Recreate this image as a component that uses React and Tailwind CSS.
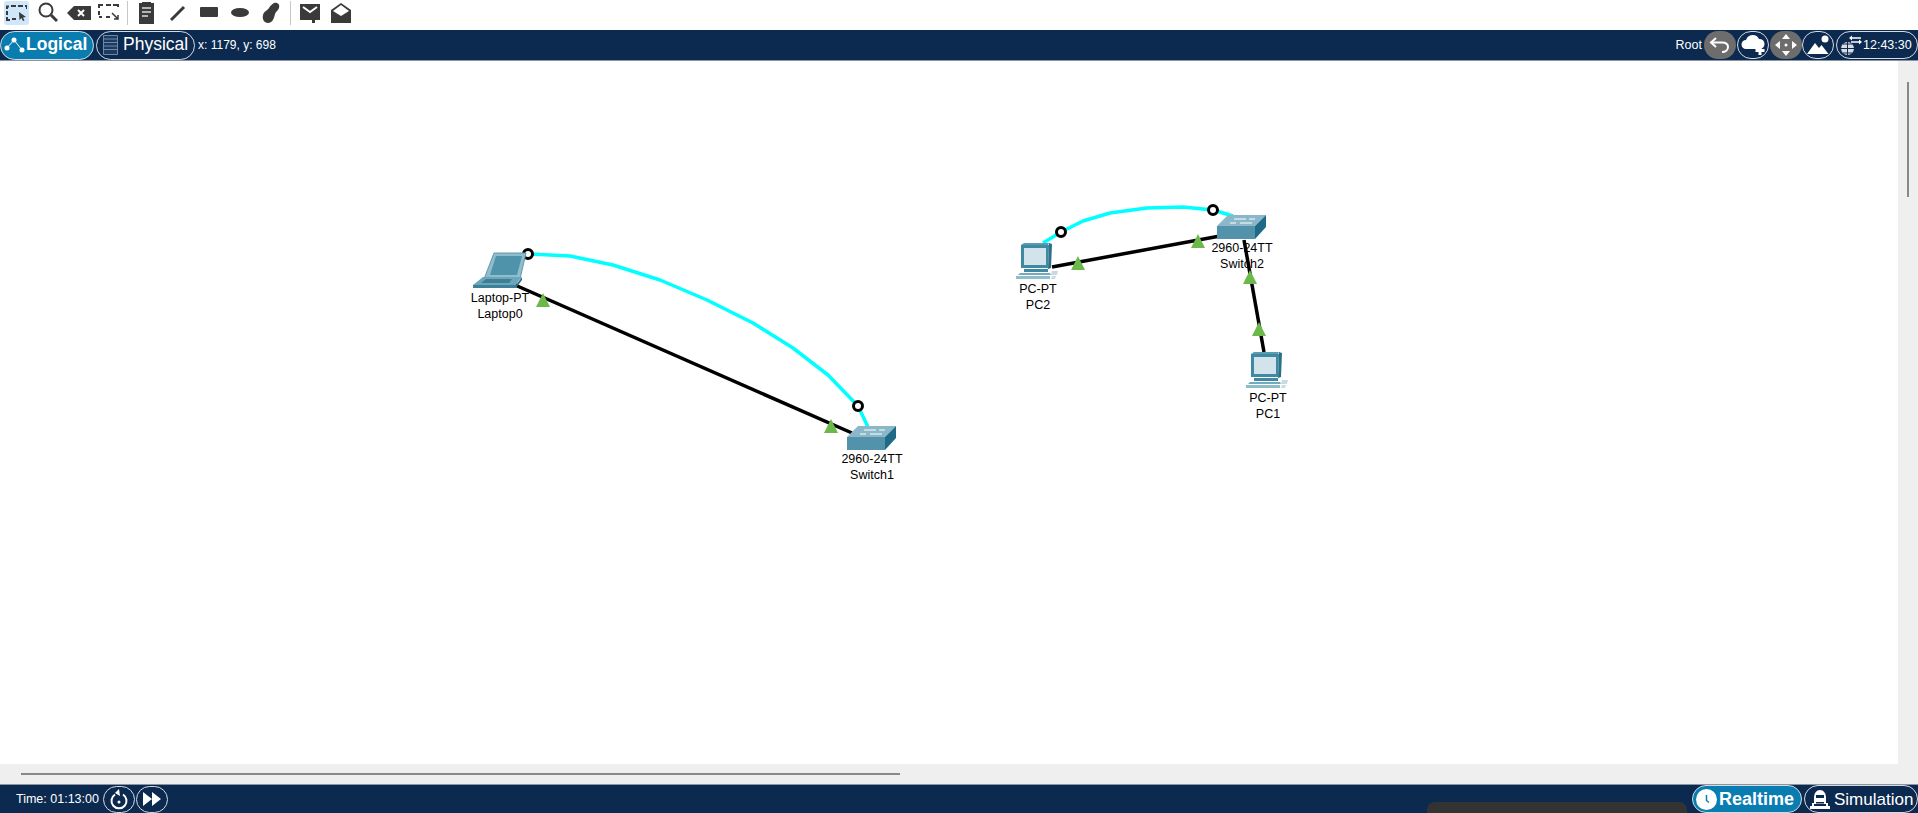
const FONT = "font-['Liberation_Sans',Arial,sans-serif]";

function ToolIcon({ width, children, className = "" }) {
  return (
    <svg width={width} height="24" viewBox={`0 0 ${width} 24`} className={`shrink-0 ${className}`}>
      {children}
    </svg>
  );
}

function Separator() {
  return <div className="h-[24px] w-px bg-[#c8c8c8]" />;
}

function Toolbar() {
  return (
    <div className="flex h-[30px] items-start bg-white pl-[4px] pt-px">
      <div className="flex h-[24px] w-[25px] items-center justify-center rounded-[3px] bg-[#cfe6fb]">
        <svg width="21" height="16" viewBox="0 0 21 16" fill="none">
          <path d="M0 1.500h3M5 1h5M12 1h5M19 1h2v3M1 1v3M1 6v4M1 12v3h3M6 14h4" stroke="#3a3a3a" strokeWidth="2" />
          <path d="M13 7l7 5-3 .5 1.500 3-1.500.5-1.500-3-2 2z" fill="#3a3a3a" />
        </svg>
      </div>
      <ToolIcon width="21" className="ml-[8px]">
        <circle cx="9" cy="9" r="6.500" fill="none" stroke="#3a3a3a" strokeWidth="2" />
        <path d="M14 14l6 6" stroke="#3a3a3a" strokeWidth="3" />
      </ToolIcon>
      <ToolIcon width="25" className="ml-[9px]">
        <path d="M0 12l7-7h17v14H7z" fill="#3a3a3a" />
        <path d="M11 9l6 6M17 9l-6 6" stroke="#fff" strokeWidth="2" />
      </ToolIcon>
      <ToolIcon width="22" className="ml-[6px]">
        <path d="M1 7V4h4M8 4h5M15 4h5v2M1 10v4M1 16h3M8 16h4" stroke="#3a3a3a" strokeWidth="2" fill="none" />
        <path d="M14 12l6 6M20 14v4h-4" stroke="#3a3a3a" strokeWidth="1.500" fill="none" />
      </ToolIcon>
      <div className="ml-[7px]">
        <Separator />
      </div>
      <ToolIcon width="15" className="ml-[11px]">
        <path d="M0 2h3V1h9v1h3v21H0z" fill="#3a3a3a" />
        <path d="M3 7h9M3 11h9M3 15h6" stroke="#ddd" strokeWidth="1.500" />
      </ToolIcon>
      <ToolIcon width="16" className="ml-[16px]">
        <path d="M1 19L14 6" stroke="#3a3a3a" strokeWidth="3" />
      </ToolIcon>
      <ToolIcon width="18" className="ml-[14px]">
        <rect x="0" y="6" width="18" height="10" rx="1" fill="#3a3a3a" />
      </ToolIcon>
      <ToolIcon width="18" className="ml-[13px]">
        <ellipse cx="9" cy="11.500" rx="9" ry="4.500" fill="#3a3a3a" />
      </ToolIcon>
      <ToolIcon width="18" className="ml-[13px]">
        <path d="M12 2c4-1 6 2 5 5-1 3-3 3-4 6-1 5-3 9-7 9-4 0-6-4-5-8 1-4 4-4 6-7 1-2 3-4 5-5z" fill="#3a3a3a" />
      </ToolIcon>
      <div className="ml-[10px]">
        <Separator />
      </div>
      <ToolIcon width="21" className="ml-[9px]">
        <path d="M0 3h20v16h-5v3h-3v-3H0z" fill="#3a3a3a" />
        <path d="M3 6l7 5 7-5" stroke="#fff" strokeWidth="2" fill="none" />
      </ToolIcon>
      <ToolIcon width="21" className="ml-[10px]">
        <path d="M10 2l10 7v13H0V9z" fill="#3a3a3a" />
        <path d="M2 10l8-6 8 6-8 5z" fill="#fff" />
      </ToolIcon>
    </div>
  );
}

function LogicalGlyph() {
  return (
    <svg width="22" height="20" viewBox="0 0 22 20" className="shrink-0">
      <path d="M4 13l7-8 8 10" stroke="#fff" strokeWidth="1" fill="none" />
      <circle cx="11" cy="5" r="2.500" fill="#fff" />
      <circle cx="4" cy="13" r="2.500" fill="#fff" />
      <circle cx="19" cy="15" r="2.500" fill="#fff" />
    </svg>
  );
}

function RoundBtn({ gray, children, className = "" }) {
  return (
    <div
      className={`flex h-[28px] w-[32px] items-center justify-center rounded-full ${
        gray ? "bg-[#6d6d6d]" : "border border-[#d5dbe3] bg-[#0c2a50]"
      } ${className}`}
    >
      {children}
    </div>
  );
}

function NavBar() {
  return (
    <div className="flex h-[31px] items-center border-b border-[#8a94a3] bg-[#0c2a50] text-white">
      <div className="flex h-[29px] w-[94px] items-center rounded-full border border-[#d5dbe3] bg-[#0a7db0] pl-[2px]">
        <LogicalGlyph />
        <span className="ml-[1px] text-[17.500px] font-bold leading-none">Logical</span>
      </div>
      <div className="ml-[2px] flex h-[29px] w-[99px] items-center rounded-full border border-[#d5dbe3] pl-[6px]">
        <svg width="15" height="20" viewBox="0 0 15 20" className="shrink-0">
          <path d="M.5.5h14v19H.5zM.5 4h14M.5 7.500h14M.5 11h14M.5 14.500h14" fill="#1c3b61" stroke="#6f88a5" />
        </svg>
        <span className="ml-[5px] text-[17.500px] leading-none">Physical</span>
      </div>
      <span className="ml-[3px] text-[12px]">x: 1179, y: 698</span>
      <div className="ml-auto flex items-center">
        <span className="mr-[2px] text-[12.500px]">Root</span>
        <RoundBtn gray>
          <svg width="22" height="20" viewBox="0 0 22 20" fill="none">
            <path d="M7 3L2 7.500 7 12" stroke="#fff" strokeWidth="2" />
            <path d="M2 7.500h11c4 0 6 2 6 4.500s-2 5-6 5" stroke="#fff" strokeWidth="2" />
          </svg>
        </RoundBtn>
        <RoundBtn className="ml-px">
          <svg width="26" height="22" viewBox="0 0 26 22">
            <path d="M6 15a4.500 4.500 0 0 1 0-9 7 7 0 0 1 13-1 5 5 0 0 1 1 10z" fill="#fff" />
            <path d="M20 12v9M15.500 16.500h9" stroke="#fff" strokeWidth="3" />
          </svg>
        </RoundBtn>
        <RoundBtn gray className="ml-px">
          <svg width="24" height="24" viewBox="0 0 24 24" fill="#fff">
            <path d="M12 1l4 5H8zM12 23l-4-5h8zM1 12l5-4v8zM23 12l-5 4V8z" />
            <circle cx="12" cy="12" r="1.500" />
          </svg>
        </RoundBtn>
        <RoundBtn>
          <svg width="26" height="22" viewBox="0 0 26 22" fill="#fff">
            <path d="M2 20l8-11 4 5 2.500-3 7 9z" />
            <circle cx="20" cy="5" r="3.500" />
          </svg>
        </RoundBtn>
        <div className="ml-[2px] flex h-[28px] w-[82px] items-center rounded-full border border-[#d5dbe3] pl-[3px]">
          <svg width="22" height="24" viewBox="0 0 22 24" className="shrink-0" fill="none">
            <circle cx="7.500" cy="15.500" r="6.500" fill="#d8dde4" />
            <path d="M1 15.500h13M7.500 9v13M3 11h9M3 20h9" stroke="#0c2a50" strokeWidth="1" />
            <path d="M12 5h9M11 9h10" stroke="#fff" strokeWidth="1.500" />
            <path d="M12 2.500L9 5l3 2.500zM19 6.500L22 9l-3 2.500z" fill="#fff" />
          </svg>
          <span className="ml-[1px] text-[12.500px]">12:43:30</span>
        </div>
      </div>
    </div>
  );
}

function LaptopIcon() {
  return (
    <svg width="54" height="36" viewBox="0 0 54 36">
      <path d="M21 1h32l-6 26H11z" fill="#8fbdcc" stroke="#5f9aae" />
      <path d="M23 4h26l-5 19H17z" fill="#4f93aa" />
      <path d="M10 25h38l-5 8H0z" fill="#6ba6ba" />
      <path d="M13 27h26l-3 4H8z" fill="#3f7f96" />
      <path d="M0 33h43v3H0z" fill="#3f8099" />
      <path d="M43 33l6-8v3l-6 8z" fill="#2e6b82" />
    </svg>
  );
}

function PcIcon() {
  return (
    <svg width="44" height="36" viewBox="0 0 44 36">
      <path d="M5 2h28l-1 23H5z" fill="#3f8aa3" />
      <path d="M33 0l3 1-1 24-3 1z" fill="#2d6f87" />
      <path d="M5 2l3-2h25l-1 2z" fill="#5a9db3" />
      <rect x="8" y="5" width="22" height="17" fill="#d3e3ec" />
      <path d="M8 26h24v3H8z" fill="#3f8aa3" />
      <path d="M4 30h30l1 2H2z" fill="#74aabd" />
      <path d="M0 33h34v3H0z" fill="#8fbdcc" />
      <path d="M36 28h6l-1 4h-6zM36 33h4l-1 3h-4z" fill="#c8dbe3" />
    </svg>
  );
}

function SwitchIcon() {
  return (
    <svg width="49" height="24" viewBox="0 0 49 24" className="-translate-x-px">
      <path d="M11 0h38l-11 11H0z" fill="#8ab8c8" />
      <path d="M0 11h38v13H0z" fill="#5292aa" />
      <path d="M38 11L49 0v12L38 24z" fill="#1f6b87" />
      <path d="M17 4h12M32 4h6M13 8h6M23 8h12" stroke="#fff" strokeWidth="1" />
    </svg>
  );
}

function Triangle({ x, y }) {
  return <path d={`M${x} ${y - 7}l7 14h-14z`} fill="#6cb84a" />;
}

function Port({ x, y }) {
  return <circle cx={x} cy={y} r="4.500" fill="#fff" stroke="#000" strokeWidth="3" />;
}

function Wires() {
  return (
    <svg width="1898" height="703" viewBox="0 61 1898 703" className="absolute inset-0">
      <g fill="none" stroke="#00ffff" strokeWidth="3.500" strokeLinejoin="round">
        <polyline points="530,254 570,256 613,265 660,280 707,300 753,323 793,348 828,375 858,406 868,427" />
        <polyline points="1043,243 1061,232 1083,221 1110,213 1147,208 1183,207 1213,210 1233,216" />
      </g>
      <g stroke="#000" strokeWidth="3.500">
        <path d="M515 285L852 433" />
        <path d="M1052 267L1220 236" />
        <path d="M1244 240L1264 352" />
      </g>
      <Triangle x={543} y={300} />
      <Triangle x={831} y={426} />
      <Triangle x={1078} y={263} />
      <Triangle x={1198} y={241} />
      <Triangle x={1250} y={277} />
      <Triangle x={1259} y={329} />
      <Port x={528} y={254} />
      <Port x={858} y={406} />
      <Port x={1061} y={232} />
      <Port x={1213} y={210} />
    </svg>
  );
}

function Node({ className, icon, lines, gap }) {
  return (
    <div className={`absolute flex w-[100px] flex-col items-center text-[12.500px] leading-[16px] text-black ${className}`}>
      {icon}
      <div className={`text-center ${gap}`}>
        {lines.map((line) => (
          <div key={line}>{line}</div>
        ))}
      </div>
    </div>
  );
}

function Canvas() {
  return (
    <div className="flex min-h-0 flex-1">
      <div className="flex min-w-0 flex-1 flex-col">
        <div className="relative flex-1 overflow-hidden bg-white">
          <Wires />
          <Node className="left-[450px] top-[191px]" icon={<LaptopIcon />} lines={["Laptop-PT", "Laptop0"]} gap="mt-[2px]" />
          <Node className="left-[822px] top-[365px]" icon={<SwitchIcon />} lines={["2960-24TT", "Switch1"]} gap="mt-px" />
          <Node className="left-[988px] top-[182px]" icon={<PcIcon />} lines={["PC-PT", "PC2"]} gap="mt-[2px]" />
          <Node className="left-[1192px] top-[154px]" icon={<SwitchIcon />} lines={["2960-24TT", "Switch2"]} gap="mt-px" />
          <Node className="left-[1218px] top-[291px]" icon={<PcIcon />} lines={["PC-PT", "PC1"]} gap="mt-[2px]" />
        </div>
        <div className="flex h-[20px] items-center bg-[#efefef] pl-[21px]">
          <div className="h-[2px] w-[879px] bg-[#888]" />
        </div>
      </div>
      <div className="w-[20px] bg-[#efefef] pl-[9px] pt-[21px]">
        <div className="h-[115px] w-[2px] bg-[#888]" />
      </div>
    </div>
  );
}

function Footer() {
  return (
    <div className="relative flex h-[29px] items-center border-t border-[#8a94a3] bg-[#0c2a50] text-white">
      <span className="ml-[16px] text-[12.500px]">Time: 01:13:00</span>
      <div className="ml-[4px] flex h-[27px] w-[32px] items-center justify-center rounded-full border border-[#d5dbe3]">
        <svg width="20" height="22" viewBox="0 0 20 22" fill="none">
          <path d="M6 6.500a7.500 7.500 0 1 0 8 0" stroke="#fff" strokeWidth="2" />
          <path d="M10 1L6 5l5 3z" fill="#fff" />
          <circle cx="10" cy="14" r="1.500" fill="#fff" />
        </svg>
      </div>
      <div className="ml-[1px] flex h-[27px] w-[32px] items-center justify-center rounded-full border border-[#d5dbe3]">
        <svg width="18" height="14" viewBox="0 0 18 14" fill="#fff">
          <path d="M0 0l9 7-9 7zM9 0l9 7-9 7z" />
        </svg>
      </div>
      <div className="ml-auto flex items-center">
        <div className="flex h-[28px] w-[110px] items-center rounded-full border border-[#d5dbe3] bg-[#0a7db0] pl-[3px]">
          <svg width="21" height="21" viewBox="0 0 21 21" className="shrink-0">
            <circle cx="10.500" cy="10.500" r="10.500" fill="#fff" />
            <path d="M10.500 6v5.500l2.500 2" stroke="#0a7db0" strokeWidth="1.500" fill="none" />
          </svg>
          <span className="ml-[2px] text-[18px] font-bold leading-none">Realtime</span>
        </div>
        <div className="ml-[2px] flex h-[28px] w-[114px] items-center rounded-full border border-[#d5dbe3] pl-[4px]">
          <svg width="22" height="22" viewBox="0 0 22 22" className="shrink-0" fill="#fff">
            <path d="M5 10c0-5 2.500-8 6-8s6 3 6 8v6H5z" />
            <path d="M7 7h8v3H7z" fill="#0c2a50" />
            <path d="M1 18h20v3H1zM3 15h2v3H3zM17 15h2v3h-2z" />
            <path d="M7 14h8v1.500H7z" fill="#0c2a50" />
          </svg>
          <span className="ml-[3px] text-[17px] leading-none">Simulation</span>
        </div>
      </div>
      <div className="absolute bottom-0 left-[1427px] h-[11px] w-[260px] rounded-t-[8px] bg-[#333]" />
    </div>
  );
}

export default function App() {
  return (
    <div className={`flex h-[813px] flex-col overflow-hidden bg-white ${FONT}`}>
      <Toolbar />
      <NavBar />
      <Canvas />
      <Footer />
    </div>
  );
}
